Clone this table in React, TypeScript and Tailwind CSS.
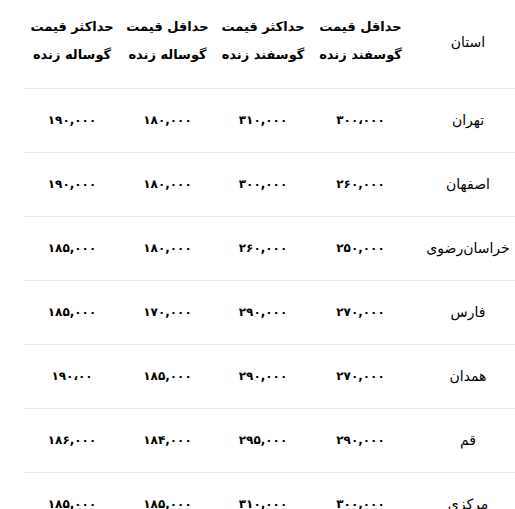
import React from "react";

const rows: [string, string, string, string, string][] = [
  ["تهران", "۳۰۰،۰۰۰", "۳۱۰,۰۰۰", "۱۸۰,۰۰۰", "۱۹۰,۰۰۰"],
  ["اصفهان", "۲۶۰,۰۰۰", "۳۰۰,۰۰۰", "۱۸۰,۰۰۰", "۱۹۰,۰۰۰"],
  ["خراسان‌رضوی", "۲۵۰,۰۰۰", "۲۶۰,۰۰۰", "۱۸۰,۰۰۰", "۱۸۵,۰۰۰"],
  ["فارس", "۲۷۰,۰۰۰", "۲۹۰,۰۰۰", "۱۷۰,۰۰۰", "۱۸۵,۰۰۰"],
  ["همدان", "۲۷۰,۰۰۰", "۲۹۰,۰۰۰", "۱۸۵,۰۰۰", "۱۹۰،۰۰"],
  ["قم", "۲۹۰,۰۰۰", "۲۹۵,۰۰۰", "۱۸۴,۰۰۰", "۱۸۶,۰۰۰"],
  ["مرکزی", "۳۰۰,۰۰۰", "۳۱۰,۰۰۰", "۱۸۵,۰۰۰", "۱۸۵,۰۰۰"],
];

const headers: [string, string][] = [
  ["حداقل قیمت", "گوسفند زنده"],
  ["حداکثر قیمت", "گوسفند زنده"],
  ["حداقل قیمت", "گوساله زنده"],
  ["حداکثر قیمت", "گوساله زنده"],
];

export default function App() {
  return (
    <div className="w-[515px] h-[509px] overflow-hidden bg-white text-black" style={{ fontFamily: '"DejaVu Sans", sans-serif' }}>
      <div className="ml-[24px] w-[502px]" dir="rtl">
        <table className="w-[502px] table-fixed border-collapse">
          <colgroup>
            <col className="w-[116px]" />
            <col className="w-[99px]" />
            <col className="w-[96px]" />
            <col className="w-[95px]" />
            <col className="w-[96px]" />
          </colgroup>
          <thead>
            <tr className="h-[88px] border-b border-[#e8e8e8]">
              <th className="text-center align-middle text-[14px] font-normal pb-[3px]">استان</th>
              {headers.map((h, i) => (
                <th key={i} className="text-center align-top pt-[13px] text-[13px] font-bold leading-[28px] whitespace-nowrap">
                  <div>{h[0]}</div>
                  <div>{h[1]}</div>
                </th>
              ))}
            </tr>
          </thead>
          <tbody>
            {rows.map((r, i) => (
              <tr key={i} className="h-[64px] border-b border-[#e8e8e8]">
                <td className="text-center align-middle text-[14px]">{r[0]}</td>
                {r.slice(1).map((v, j) => (
                  <td key={j} className="text-center align-middle text-[12px] font-bold">{v}</td>
                ))}
              </tr>
            ))}
          </tbody>
        </table>
      </div>
    </div>
  );
}
